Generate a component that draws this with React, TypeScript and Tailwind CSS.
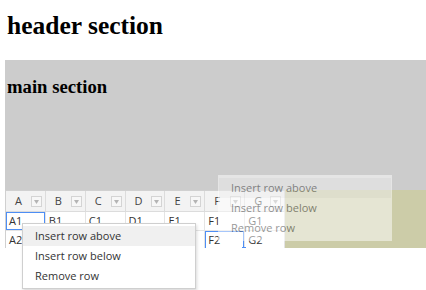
const columns = ['A', 'B', 'C', 'D', 'E', 'F', 'G'];
const menuItems = ['Insert row above', 'Insert row below', 'Remove row'];

function HeaderCell({ label }: { label: string }) {
  return (
    <div className="w-[40px] h-full flex items-center border-r border-[#dcdcdc] relative">
      <span className="ml-[9px] text-[11px] text-[#444]">{label}</span>
      <span className="absolute left-[25px] top-[5px] w-[11px] h-[11px] border border-[#d4d4d4] bg-[#f7f7f7] flex items-center justify-center">
        <svg width="5" height="4" viewBox="0 0 5 4">
          <path d="M0 0 L5 0 L2.5 4 Z" fill="#b4b4b4" />
        </svg>
      </span>
    </div>
  );
}

function DataCell({ value, selected, handle }: { value: string; selected?: boolean; handle?: boolean }) {
  return (
    <div
      className={`w-[40px] h-full flex items-center border-r border-[#e4e4e4] relative ${
        selected ? 'shadow-[inset_0_0_0_1px_#4d8ef5]' : ''
      }`}
    >
      <span className="ml-[3px] text-[11px] text-[#333]">{value}</span>
      {handle && <span className="absolute right-[-2px] bottom-[-2px] w-[4px] h-[4px] bg-[#4d8ef5]" />}
    </div>
  );
}

function ContextMenu({ className }: { className: string }) {
  return (
    <div className={`absolute w-[174px] bg-white border border-[#cfcfcf] py-[2px] ${className}`}>
      {menuItems.map((item, i) => (
        <div
          key={item}
          className={`h-[20px] pl-[12px] flex items-center text-[11px] text-[#333] ${i === 0 ? 'bg-[#f0f0f0]' : ''}`}
        >
          {item}
        </div>
      ))}
    </div>
  );
}

export default function App() {
  return (
    <div className="w-[426px] h-[290px] relative overflow-hidden bg-white font-['Liberation_Serif',serif]">
      <header className="h-[60px] pl-[7px] pt-[13px]">
        <h1 className="text-[25.5px] leading-none font-bold text-black">header section</h1>
      </header>

      <main className="ml-[5px] bg-[#cccccc]">
        <div className="h-[130px] pl-[2px] pt-[18px]">
          <h2 className="text-[18.7px] leading-none font-bold text-black">main section</h2>
        </div>

        {/* grid container */}
        <div className="h-[58px] bg-[#cccca8] overflow-hidden font-['Open_Sans',sans-serif]">
          <div className="w-[280px] bg-white border-t border-l border-[#d0d0d0]">
            <div className="h-[21px] flex bg-[#f3f3f3] border-b border-[#dcdcdc]">
              {columns.map((c) => (
                <HeaderCell key={c} label={c} />
              ))}
            </div>
            <div className="h-[19px] flex border-b border-[#e4e4e4]">
              {columns.map((c, i) => (
                <DataCell key={c} value={`${c}1`} selected={i === 0} />
              ))}
            </div>
            <div className="h-[19px] flex border-b border-[#e4e4e4]">
              {columns.map((c, i) => (
                <DataCell key={c} value={`${c}2`} selected={i === 5} handle={i === 5} />
              ))}
            </div>
          </div>
        </div>
      </main>

      {/* fading context menu */}
      <div className="font-['Open_Sans',sans-serif]">
        <ContextMenu className="left-[218px] top-[175px] opacity-50 border-transparent" />
        <ContextMenu className="left-[22px] top-[223px] shadow-[1px_2px_3px_rgba(0,0,0,0.15)]" />
      </div>
    </div>
  );
}
